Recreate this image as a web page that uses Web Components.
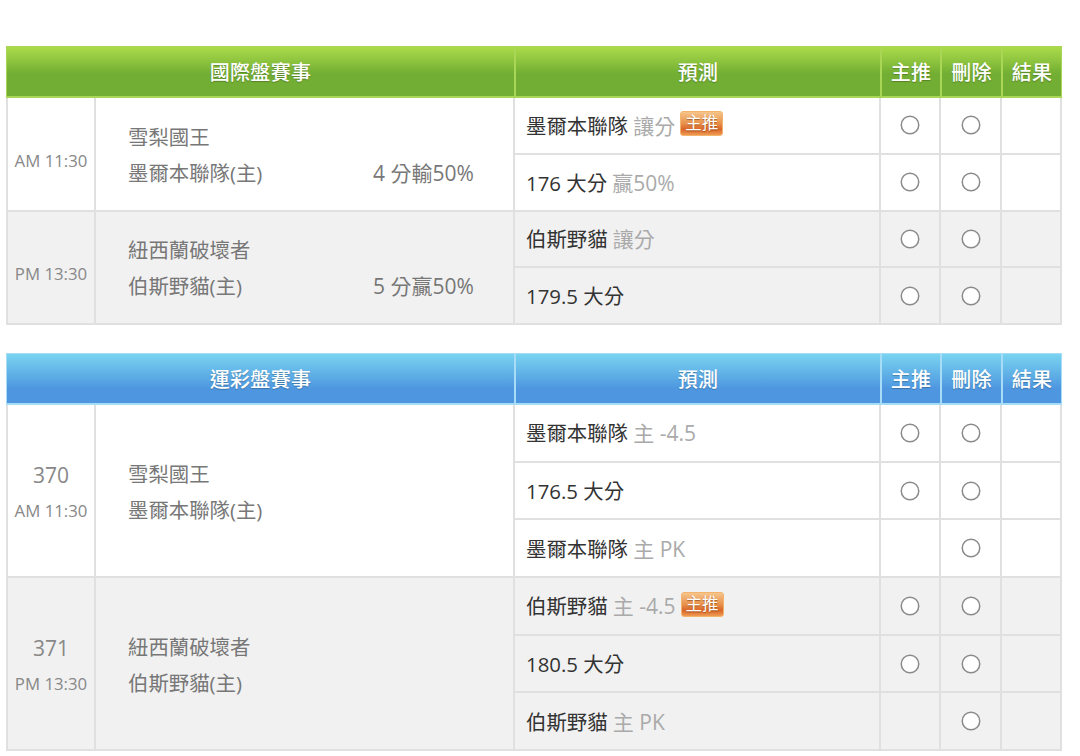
<!DOCTYPE html>
<html lang="zh-Hant">
  <head>
    <meta charset="UTF-8" />
    <title>賽事預測</title>
    <style>
      body {
        margin: 0;
        padding: 46px 18px 0 6px;
        background: #fff;
        font-family: "Open Sans", "Noto Sans CJK TC", sans-serif;
      }
    </style>
  </head>
  <body>
    <template id="game-table-template">
      <style>
        :host {
          display: block;
          margin-bottom: 28px;
          border: solid #e0e0e0;
          border-width: 0 2px 0 2px;
        }
        .head {
          display: grid;
          grid-template-columns: 507px 366px 60px 61px 1fr;
          height: 52px;
          margin: 0 -2px;
          box-sizing: border-box;
          background: var(--head-bg);
          border: 1px solid var(--head-line);
          border-bottom-width: 2px;
          color: #fff;
          font-size: 20px;
          font-weight: 500;
          text-shadow: 0 1px 1px rgba(0, 0, 0, 0.25);
        }
        .head div {
          display: flex;
          align-items: center;
          justify-content: center;
          letter-spacing: 0.3px;
        }
        .head div + div {
          border-left: 2px solid var(--head-line);
        }
      </style>
      <div class="head">
        <div id="title"></div>
        <div>預測</div>
        <div>主推</div>
        <div>刪除</div>
        <div>結果</div>
      </div>
      <slot></slot>
    </template>

    <template id="game-group-template">
      <style>
        :host {
          display: grid;
          grid-template-columns: 86px 419px 1fr;
          background: #fff;
          color: #777;
          font-size: 20.4px;
        }
        :host([shade]) {
          background: #f1f1f1;
        }
        .time {
          display: flex;
          flex-direction: column;
          align-items: center;
          justify-content: center;
          padding-top: 4px;
          line-height: 36px;
          font-size: 16.8px;
          color: #888;
          border-bottom: 2px solid #e0e0e0;
        }
        /* no game number: the time sits where the second line would be */
        .time.single {
          padding-top: 14px;
        }
        .num {
          font-size: 21px;
        }
        .teams {
          display: flex;
          flex-direction: column;
          justify-content: center;
          padding: 2px 0 0 32px;
          border-left: 2px solid #e0e0e0;
          border-bottom: 2px solid #e0e0e0;
          line-height: 36px;
        }
        .line {
          display: flex;
        }
        .line span:first-child {
          width: 245px;
        }
        #odds {
          font-size: 21px;
        }
        .preds {
          border-left: 2px solid #e0e0e0;
        }
      </style>
      <div class="time" id="when"><span class="num" id="num"></span><span id="time"></span></div>
      <div class="teams">
        <div class="line"><span id="away"></span></div>
        <div class="line"><span id="home"></span><span id="odds"></span></div>
      </div>
      <div class="preds"><slot></slot></div>
    </template>

    <template id="game-pick-template">
      <style>
        :host {
          display: grid;
          grid-template-columns: 364px 60px 61px 1fr;
          height: var(--row-h, 56.75px);
          box-sizing: border-box;
          border-bottom: 2px solid #e0e0e0;
          color: #333;
          font-size: 20.4px;
        }
        .label {
          display: flex;
          align-items: center;
          padding-left: 11px;
          padding-bottom: 1px;
          white-space: pre;
        }
        .cell {
          display: flex;
          align-items: center;
          justify-content: center;
          border-left: 2px solid #e0e0e0;
        }
        svg {
          display: block;
        }
        ::slotted(em) {
          font-style: normal;
          font-size: 21px;
          color: #aaa;
        }
      </style>
      <div class="label"><slot></slot></div>
      <div class="cell" id="star"></div>
      <div class="cell" id="del"></div>
      <div class="cell"></div>
    </template>

    <template id="top-badge-template">
      <style>
        :host {
          display: block;
          width: 43px;
          height: 25px;
          margin: -2px 0 0 5px;
          box-sizing: border-box;
          border: 1px solid #f4b36c;
          border-radius: 3px;
          background: linear-gradient(#f6c48a, #e8914a 50%, #d9662a 75%, #ee9a52);
          color: #fff;
          font-size: 16.5px;
          line-height: 21px;
          text-align: center;
          white-space: normal;
          text-shadow: 0 1px 1px rgba(120, 50, 0, 0.6);
        }
      </style><span>主推</span>
    </template>

    <game-table title-text="國際盤賽事" style="--head-bg: linear-gradient(#abdb4b, #72ae33 55%); --head-line: #a9d654">
      <game-group time="AM 11:30" away="雪梨國王" home="墨爾本聯隊(主)" odds="4 分輸50%">
        <game-pick>墨爾本聯隊 <em>讓分</em><top-badge></top-badge></game-pick>
        <game-pick>176 大分 <em>贏50%</em></game-pick>
      </game-group>
      <game-group shade time="PM 13:30" away="紐西蘭破壞者" home="伯斯野貓(主)" odds="5 分贏50%">
        <game-pick>伯斯野貓 <em>讓分</em></game-pick>
        <game-pick>179.5 大分</game-pick>
      </game-group>
    </game-table>

    <game-table title-text="運彩盤賽事" style="--head-bg: linear-gradient(#79d4f0, #4e97e0 70%); --head-line: #a6dcf5; --row-h: 57.7px">
      <game-group num="370" time="AM 11:30" away="雪梨國王" home="墨爾本聯隊(主)">
        <game-pick>墨爾本聯隊 <em>主 -4.5</em></game-pick>
        <game-pick>176.5 大分</game-pick>
        <game-pick no-star>墨爾本聯隊 <em>主 PK</em></game-pick>
      </game-group>
      <game-group shade num="371" time="PM 13:30" away="紐西蘭破壞者" home="伯斯野貓(主)">
        <game-pick>伯斯野貓 <em>主 -4.5</em><top-badge></top-badge></game-pick>
        <game-pick>180.5 大分</game-pick>
        <game-pick no-star>伯斯野貓 <em>主 PK</em></game-pick>
      </game-group>
    </game-table>

    <script>
      const RADIO =
        '<svg width="20" height="20" viewBox="0 0 20 20"><circle cx="10" cy="10" r="8.75" fill="#fff" stroke="#8a8a8a" stroke-width="1.5"/></svg>';

      function shadowFrom(el, id) {
        const content = document.getElementById(id).content;
        el.attachShadow({ mode: "open" }).appendChild(content.cloneNode(true));
        return el.shadowRoot;
      }

      class GameTable extends HTMLElement {
        constructor() {
          super();
          const root = shadowFrom(this, "game-table-template");
          root.getElementById("title").textContent = this.getAttribute("title-text");
        }
      }

      class GameGroup extends HTMLElement {
        constructor() {
          super();
          const root = shadowFrom(this, "game-group-template");
          for (const key of ["num", "time", "away", "home", "odds"]) {
            const value = this.getAttribute(key);
            if (value) root.getElementById(key).textContent = value;
          }
          if (!this.hasAttribute("num")) {
            root.getElementById("num").remove();
            root.getElementById("when").classList.add("single");
          }
        }
      }

      class GamePick extends HTMLElement {
        constructor() {
          super();
          const root = shadowFrom(this, "game-pick-template");
          root.getElementById("del").innerHTML = RADIO;
          // PK rows have no 主推 radio
          if (!this.hasAttribute("no-star")) {
            root.getElementById("star").innerHTML = RADIO;
          }
        }
      }

      class TopBadge extends HTMLElement {
        constructor() {
          super();
          shadowFrom(this, "top-badge-template");
        }
      }

      customElements.define("game-table", GameTable);
      customElements.define("game-group", GameGroup);
      customElements.define("game-pick", GamePick);
      customElements.define("top-badge", TopBadge);
    </script>
  </body>
</html>
